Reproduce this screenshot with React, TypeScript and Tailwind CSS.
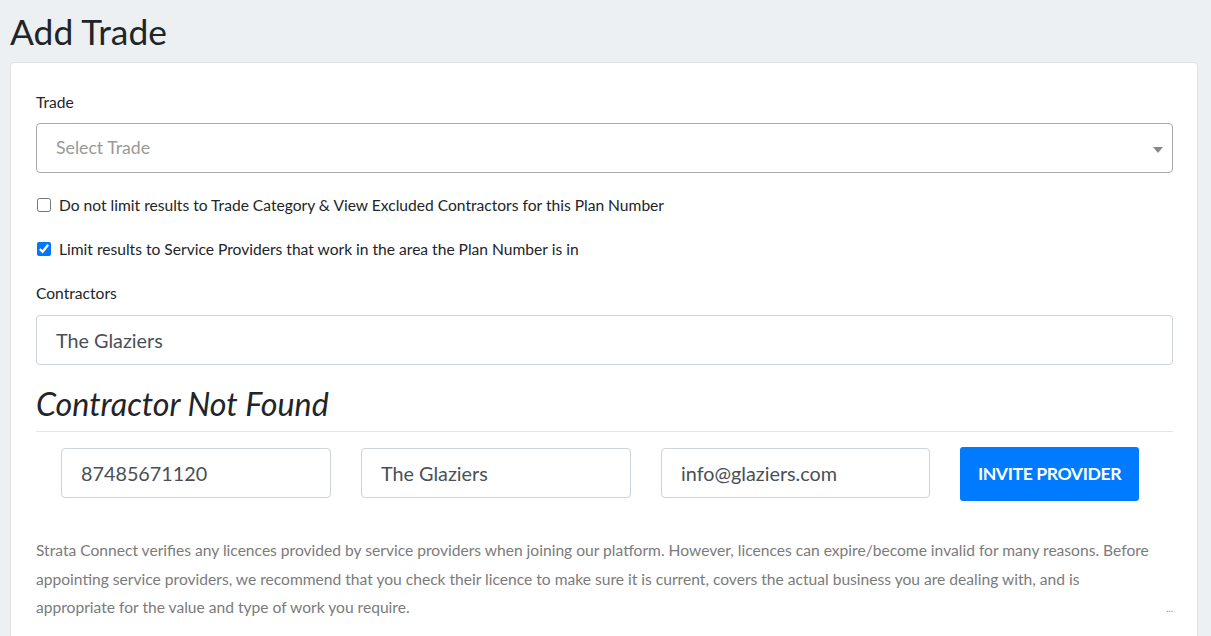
import { useState } from 'react';

function TextBox({ value, className }: { value: string; className?: string }) {
  return (
    <input
      defaultValue={value}
      className={`h-[50px] rounded-[4px] border border-[#ced4da] bg-white px-[19px] text-[19.8px] text-[#495057] outline-none ${className ?? ''}`}
    />
  );
}

export default function App() {
  const [noLimit, setNoLimit] = useState(false);
  const [area, setArea] = useState(true);

  return (
    <div className="min-h-[636px] bg-[#edf0f3] pl-[10px] pr-[13px] pt-[11px] font-['Lato',sans-serif] text-[#212529]">
      <h1 className="text-[35.4px] leading-[42px]">Add Trade</h1>
      <div className="mt-[9px] rounded-[4px] border border-[#dfe2e5] bg-white pl-[25px] pr-[24px] pt-[28px] pb-[20px]">
        <label className="block text-[15.6px] leading-[22px]">Trade</label>
        <div className="relative mt-[10px] flex h-[50px] items-center rounded-[4px] border border-[#aaaaaa] pl-[19px] text-[17.7px] text-[#999999]">
          Select Trade
          <span className="absolute right-[9px] top-[23px] h-0 w-0 border-x-[5px] border-t-[6px] border-x-transparent border-t-[#888888]" />
        </div>

        <label className="mt-[22px] flex items-center gap-[8px] text-[15.6px] leading-[20px]">
          <input
            type="checkbox"
            checked={noLimit}
            onChange={(e) => setNoLimit(e.target.checked)}
            className="ml-[1px] h-[14px] w-[14px]"
          />
          Do not limit results to Trade Category &amp; View Excluded Contractors for this Plan Number
        </label>
        <label className="mt-[24px] flex items-center gap-[8px] text-[15.6px] leading-[20px]">
          <input
            type="checkbox"
            checked={area}
            onChange={(e) => setArea(e.target.checked)}
            className="ml-[1px] h-[14px] w-[14px]"
          />
          Limit results to Service Providers that work in the area the Plan Number is in
        </label>

        <label className="mt-[23px] block text-[15.6px] leading-[22px]">Contractors</label>
        <TextBox value="The Glaziers" className="mt-[11px] w-full" />

        <h2 className="mt-[19px] text-[32.2px] italic leading-[40px]">Contractor Not Found</h2>
        <hr className="mt-[7px] border-t border-[#e3e5e8]" />

        <div className="mt-[16px] flex items-start gap-[30px] pl-[25px]">
          <TextBox value="87485671120" className="w-[270px]" />
          <TextBox value="The Glaziers" className="w-[270px]" />
          <TextBox value="info@glaziers.com" className="w-[269px]" />
          <button className="mt-[-1px] h-[54px] w-[179px] rounded-[3px] bg-[#007bff] text-[17.6px] font-bold uppercase tracking-[-0.4px] text-white">
            Invite Provider
          </button>
        </div>

        <div className="mt-[35px] flex items-end justify-between">
          <p className="w-[1120px] text-[15.6px] leading-[28.5px] text-[#7b7b7b]">
            Strata Connect verifies any licences provided by service providers when joining our platform. However, licences
            can expire/become invalid for many reasons. Before appointing service providers, we recommend that you check their
            licence to make sure it is current, covers the actual business you are dealing with, and is appropriate for the
            value and type of work you require.
          </p>
          <span className="mb-[9px] text-[10px] leading-[10px] text-[#888888]">...</span>
        </div>
      </div>
    </div>
  );
}
